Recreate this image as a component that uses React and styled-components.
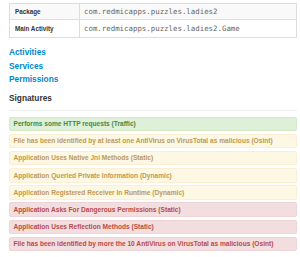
import React from "react";
import styled, { createGlobalStyle } from "styled-components";

const Global = createGlobalStyle`
  html, body { margin: 0; padding: 0; background: #fff; }
  body { font-family: "Liberation Sans", Arial, sans-serif; color: #333; }
`;

const Page = styled.div`
  padding: 3px 3px 0 9px;
  width: 300px;
  box-sizing: border-box;
`;

const Table = styled.table`
  width: 100%;
  border-collapse: collapse;
  border: 1px solid #ddd;
  table-layout: fixed;
`;

const Row = styled.tr`
  background: ${(p) => (p.$striped ? "#f9f9f9" : "#fff")};
`;

const Th = styled.th`
  width: 70px;
  height: ${(p) => p.$h || 16}px;
  padding: 0 5px;
  text-align: left;
  font-size: 6.3px;
  font-weight: bold;
  color: #333;
  border: 1px solid #ddd;
  box-sizing: border-box;
`;

const Td = styled.td`
  padding: 0 4px;
  font-family: "DejaVu Sans Mono", "Liberation Mono", monospace;
  font-size: 7.4px;
  color: #666;
  border: 1px solid #ddd;
  white-space: nowrap;
`;

const LinkList = styled.div`
  margin-top: 8px;
  display: flex;
  flex-direction: column;
`;

const SectionLink = styled.a`
  font-size: 8.3px;
  font-weight: bold;
  line-height: 13.5px;
  color: #0088cc;
  text-decoration: none;
`;

const Heading = styled.div`
  margin-top: 5.5px;
  font-size: 8.3px;
  font-weight: bold;
  line-height: 13.5px;
  color: #333;
`;

const Rule = styled.hr`
  margin: 4px 0 6px;
  border: 0;
  border-top: 1px solid #eee;
`;

const variants = {
  success: { bg: "#dff0d8", border: "#d6e9c6", color: "#468847" },
  warning: { bg: "#fcf8e3", border: "#fbeed5", color: "#c09853" },
  danger: { bg: "#f2dede", border: "#eed3d7", color: "#b94a48" },
};

const Alert = styled.div`
  margin-bottom: 2.7px;
  padding: 2.5px 3.5px;
  border: 1px solid ${(p) => variants[p.$kind].border};
  border-radius: 2px;
  background: ${(p) => variants[p.$kind].bg};
  color: ${(p) => variants[p.$kind].color};
  font-size: 6.6px;
  font-weight: bold;
  line-height: 7.5px;
  white-space: nowrap;
`;

const signatures = [
  ["success", "Performs some HTTP requests (Traffic)"],
  ["warning", "File has been identified by at least one AntiVirus on VirusTotal as malicious (Osint)"],
  ["warning", "Application Uses Native Jni Methods (Static)"],
  ["warning", "Application Queried Private Information (Dynamic)"],
  ["warning", "Application Registered Receiver In Runtime (Dynamic)"],
  ["danger", "Application Asks For Dangerous Permissions (Static)"],
  ["danger", "Application Uses Reflection Methods (Static)"],
  ["danger", "File has been identified by more the 10 AntiVirus on VirusTotal as malicious (Osint)"],
];

export default function App() {
  return (
    <Page>
      <Global />
      <Table>
        <tbody>
          <Row $striped>
            <Th>Package</Th>
            <Td>com.redmicapps.puzzles.ladies2</Td>
          </Row>
          <Row>
            <Th $h={18}>Main Activity</Th>
            <Td>com.redmicapps.puzzles.ladies2.Game</Td>
          </Row>
        </tbody>
      </Table>
      <LinkList>
        <SectionLink href="#">Activities</SectionLink>
        <SectionLink href="#">Services</SectionLink>
        <SectionLink href="#">Permissions</SectionLink>
      </LinkList>
      <Heading>Signatures</Heading>
      <Rule />
      {signatures.map(([kind, text], i) => (
        <Alert key={i} $kind={kind}>
          {text}
        </Alert>
      ))}
    </Page>
  );
}
